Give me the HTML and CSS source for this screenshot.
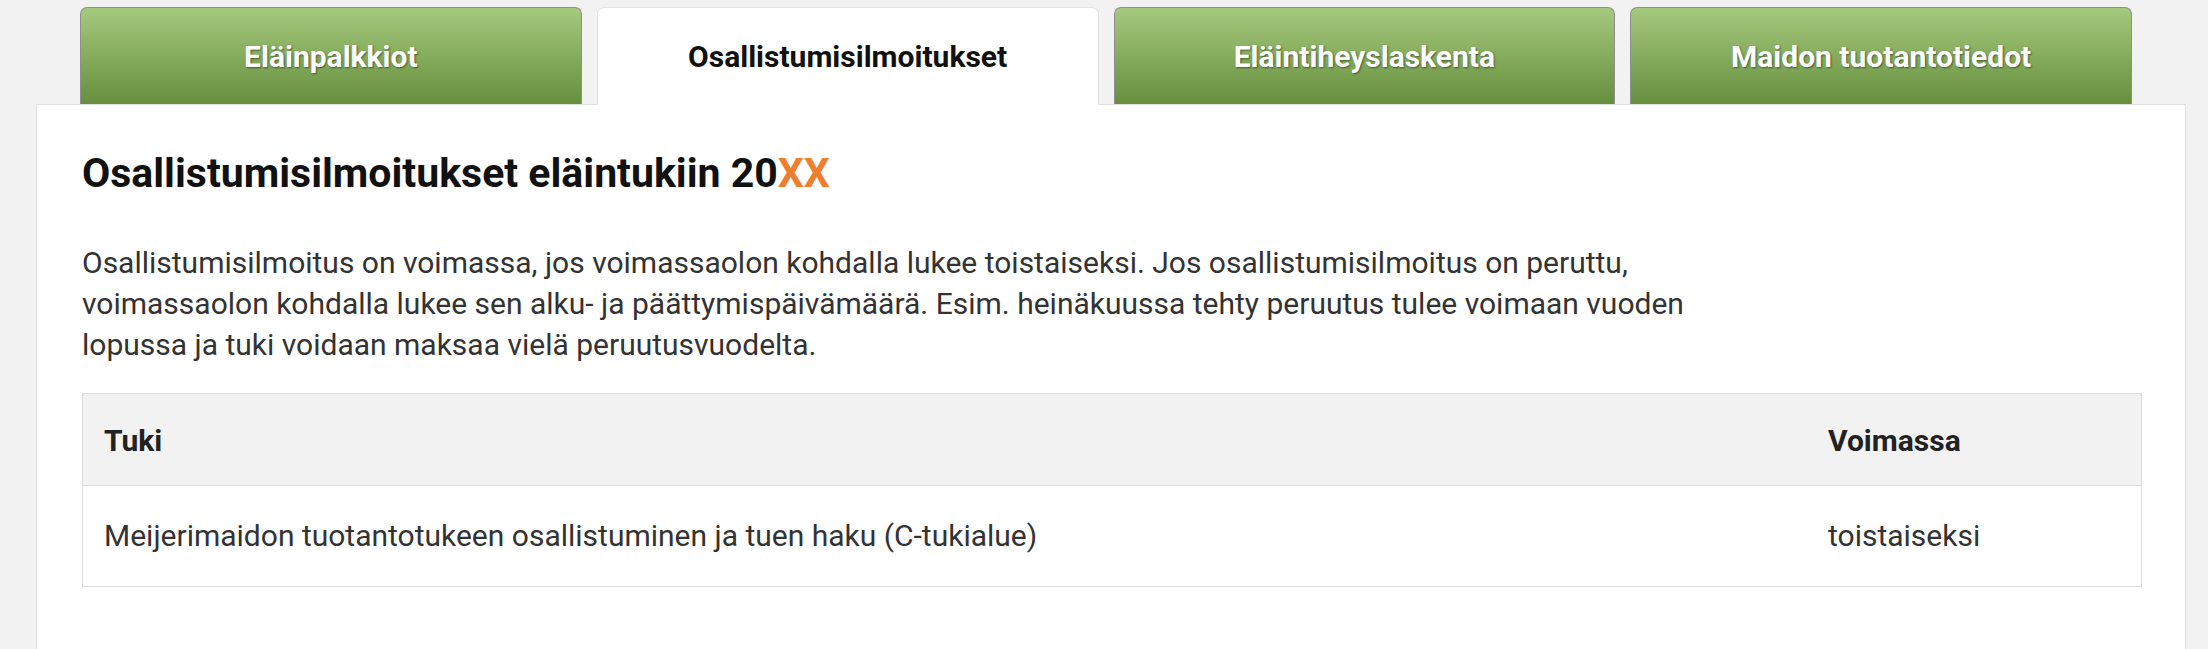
FILE: index.html
```html
<!DOCTYPE html>
<html lang="fi">
<head>
<meta charset="utf-8">
<title>Osallistumisilmoitukset</title>
<link rel="stylesheet" href="styles.css">
</head>
<body>
<div class="page">
  <nav class="tabs">
    <a class="tab">Eläinpalkkiot</a>
    <a class="tab active">Osallistumisilmoitukset</a>
    <a class="tab">Eläintiheyslaskenta</a>
    <a class="tab">Maidon tuotantotiedot</a>
  </nav>
  <section class="panel">
    <h1 class="title">Osallistumisilmoitukset eläintukiin 20<span class="xx">XX</span></h1>
    <p class="intro">Osallistumisilmoitus on voimassa, jos voimassaolon kohdalla lukee toistaiseksi. Jos osallistumisilmoitus on peruttu, voimassaolon kohdalla lukee sen alku- ja päättymispäivämäärä. Esim. heinäkuussa tehty peruutus tulee voimaan vuoden lopussa ja tuki voidaan maksaa vielä peruutusvuodelta.</p>
    <table class="grid">
      <thead>
        <tr><th>Tuki</th><th class="col-valid">Voimassa</th></tr>
      </thead>
      <tbody>
        <tr><td>Meijerimaidon tuotantotukeen osallistuminen ja tuen haku (C-tukialue)</td><td>toistaiseksi</td></tr>
      </tbody>
    </table>
  </section>
</div>
</body>
</html>
```
FILE: styles.css
```css
html, body {
  margin: 0;
  background: #f2f2f2;
  font-family: Roboto, "Liberation Sans", Arial, sans-serif;
}

.page {
  padding-left: 36px;
  width: 2150px;
}

.tabs {
  display: grid;
  grid-template-columns: repeat(4, 1fr);
  column-gap: 15px;
  width: 2052px;
  margin-left: 44px;
  padding-top: 7px;
  position: relative;
  z-index: 1;
}

.tab {
  box-sizing: border-box;
  height: 97px;
  display: flex;
  align-items: center;
  justify-content: center;
  border: 1px solid #8e8e8e;
  border-bottom: none;
  border-radius: 7px 7px 0 0;
  background: linear-gradient(#a6c97d, #658f3e);
  color: #fff;
  font-size: 30px;
  font-weight: 700;
  text-shadow: 1px 1px 2px rgba(0, 0, 0, 0.45);
}

.tab.active {
  height: 98px;
  margin-bottom: -1px;
  background: #fff;
  color: #111;
  border-color: #e3e3e3;
  text-shadow: none;
}

.panel {
  box-sizing: border-box;
  width: 2150px;
  min-height: 600px;
  background: #fff;
  border: 1px solid #e0e0e0;
  padding: 45px 43px 60px 45px;
}

.title {
  margin: 0;
  font-size: 41px;
  line-height: 47px;
  font-weight: 700;
  color: #111;
}

.xx {
  color: #ef7f2e;
}

.intro {
  margin: 45px 0 0;
  max-width: 1660px;
  font-size: 30px;
  line-height: 41px;
  color: #333;
}

.grid {
  margin-top: 28px;
  width: 100%;
  border-collapse: collapse;
  border: 1px solid #dedede;
  font-size: 30px;
  line-height: 41px;
}

.grid th {
  background: #f2f2f2;
  text-align: left;
  font-weight: 700;
  color: #222;
  padding: 26px 21px 24px;
  border-bottom: 1px solid #dedede;
}

.grid th.col-valid {
  width: 292px;
}

.grid td {
  padding: 29px 21px 30px;
  color: #333;
}
```
